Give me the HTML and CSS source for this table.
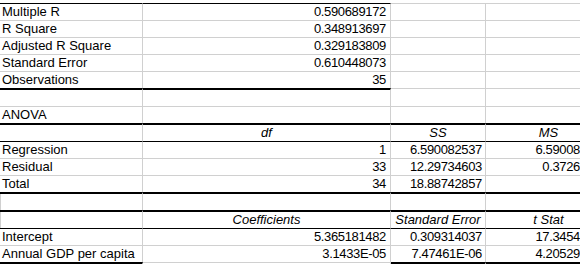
FILE: index.html
```html
<!DOCTYPE html>
<html>
<head>
<meta charset="utf-8">
<link rel="stylesheet" href="styles.css">
</head>
<body>
<div class="sheet">
  <div class="strip"></div>

  <div class="row">
    <div class="c a t-b1">Multiple R</div><div class="c b num t-b1">0.590689172</div><div class="c cc t-g"></div><div class="c d t-g"></div>
  </div>
  <div class="row">
    <div class="c a t-g">R Square</div><div class="c b num t-g">0.348913697</div><div class="c cc t-g"></div><div class="c d t-g"></div>
  </div>
  <div class="row">
    <div class="c a t-g">Adjusted R Square</div><div class="c b num t-g">0.329183809</div><div class="c cc t-g"></div><div class="c d t-g"></div>
  </div>
  <div class="row">
    <div class="c a t-g">Standard Error</div><div class="c b num t-g">0.610448073</div><div class="c cc t-g"></div><div class="c d t-g"></div>
  </div>
  <div class="row">
    <div class="c a t-g">Observations</div><div class="c b num t-g">35</div><div class="c cc t-g"></div><div class="c d t-g"></div>
  </div>
  <div class="row">
    <div class="c a t-b2"></div><div class="c b t-b2"></div><div class="c cc t-g"></div><div class="c d t-g"></div>
  </div>
  <div class="row">
    <div class="c a t-g">ANOVA</div><div class="c b t-g"></div><div class="c cc t-g"></div><div class="c d t-g"></div>
  </div>
  <div class="row">
    <div class="c a t-b2"></div><div class="c b hd t-b2">df</div><div class="c cc hd t-b2">SS</div><div class="c d hd t-b2">MS</div>
  </div>
  <div class="row">
    <div class="c a t-b1">Regression</div><div class="c b num t-b1">1</div><div class="c cc num t-b1">6.590082537</div><div class="c d num t-b1">6.59008</div>
  </div>
  <div class="row">
    <div class="c a t-g">Residual</div><div class="c b num t-g">33</div><div class="c cc num t-g">12.29734603</div><div class="c d num t-g">0.3726</div>
  </div>
  <div class="row">
    <div class="c a t-g">Total</div><div class="c b num t-g">34</div><div class="c cc num t-g">18.88742857</div><div class="c d t-g"></div>
  </div>
  <div class="row">
    <div class="c a edge t-b2"></div><div class="c b t-b2"></div><div class="c cc t-b2"></div><div class="c d t-b2"></div>
  </div>
  <div class="row">
    <div class="c a edge t-b2"></div><div class="c b hd t-b2">Coefficients</div><div class="c cc hd t-b2">Standard Error</div><div class="c d hd t-b2">t Stat</div>
  </div>
  <div class="row">
    <div class="c a t-b1">Intercept</div><div class="c b num t-b1">5.365181482</div><div class="c cc num t-b1">0.309314037</div><div class="c d num t-b1">17.3454</div>
  </div>
  <div class="row">
    <div class="c a t-g">Annual GDP per capita</div><div class="c b num t-g">3.1433E-05</div><div class="c cc num t-g">7.47461E-06</div><div class="c d num t-g">4.20529</div>
  </div>
  <div class="row end">
    <div class="c a t-b2"></div><div class="c b t-g"></div><div class="c cc t-b2"></div><div class="c d t-b2"></div>
  </div>
</div>
</body>
</html>
```

FILE: styles.css
```css
html, body {
  margin: 0;
  padding: 0;
  background: #ffffff;
  overflow: hidden;
}

.sheet {
  width: 580px;
  font-family: "Liberation Sans", Arial, sans-serif;
  font-size: 13px;
  line-height: 16px;
  color: #000000;
}

.strip {
  height: 3px;
}

.row {
  display: grid;
  grid-template-columns: 143px 248px 95px 94px;
}

.c {
  min-height: 16px;
  border-right: 1px solid #d0d0d0;
  white-space: nowrap;
  overflow: hidden;
}

.c.d {
  border-right: none;
}

.end .c {
  min-height: 0;
}

.a {
  padding-left: 2px;
}

.num {
  text-align: right;
  letter-spacing: -0.35px;
}

.b.num {
  padding-right: 4px;
}

.cc.num {
  padding-right: 3px;
}

.d.num {
  padding-right: 0;
}

.hd {
  text-align: center;
  font-style: italic;
}

.d.hd {
  padding-left: 31px;
}

.edge {
  box-shadow: inset 1px 0 0 #d0d0d0;
}

.t-g {
  border-top: 1px solid #d0d0d0;
}

.t-b1 {
  border-top: 1px solid #000000;
}

.t-b2 {
  border-top: 2px solid #000000;
}
```
